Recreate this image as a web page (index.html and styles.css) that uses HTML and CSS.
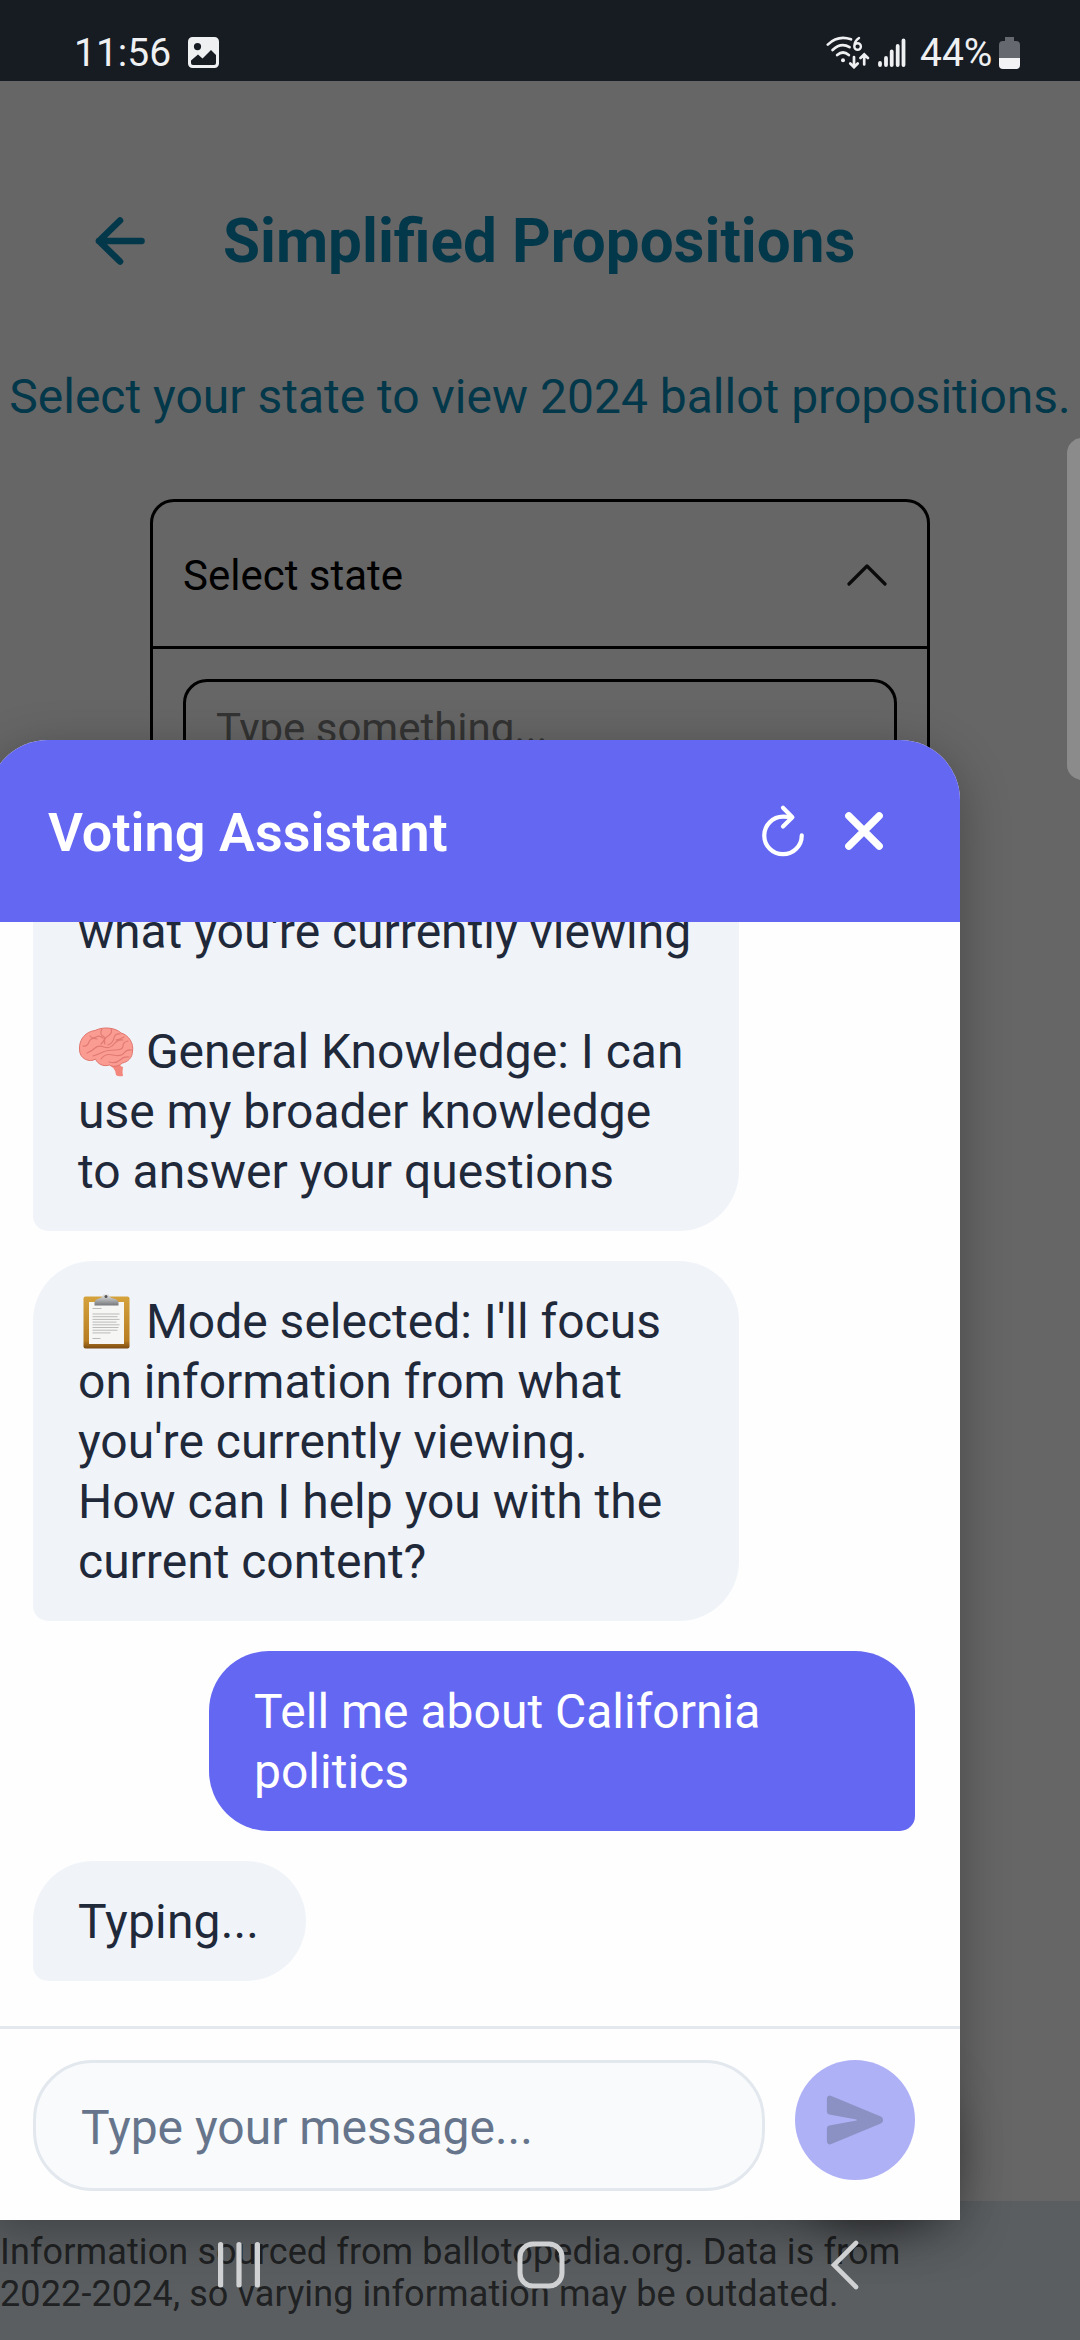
FILE: index.html
```html
<!DOCTYPE html>
<html lang="en">
<head>
<meta charset="utf-8">
<title>Simplified Propositions</title>
<link rel="stylesheet" href="styles.css">
</head>
<body>
<div class="phone">
  <header class="status">
    <span class="clock">11:56</span>
    <svg class="photo-icon" width="31" height="31" viewBox="0 0 31 31"><path fill="#eef0f2" fill-rule="evenodd" d="M4.500 0h22a4.500 4.500 0 0 1 4.500 4.500v22a4.500 4.500 0 0 1-4.500 4.500h-22A4.500 4.500 0 0 1 0 26.500v-22A4.500 4.500 0 0 1 4.500 0ZM9.500 6a3.600 3.600 0 1 0 0 7.200 3.600 3.600 0 0 0 0-7.200ZM3 23.500V26q0 2 2 2h21q2 0 2-2V18l-5-5-8.500 8.500L10 17.500Z"/></svg>
    <span class="status-right">
      <svg class="wifi" width="44" height="33" viewBox="0 0 44 33" fill="none" stroke="#eef0f2" stroke-width="2.700" stroke-linecap="round">
        <path d="M1.800 8.600Q12 -1.200 25 3.300M6.600 14Q15 6 23.500 11.200M11.200 19Q17 14 22.800 19"/>
        <circle cx="17" cy="24.300" r="2" fill="#eef0f2" stroke="none"/>
        <path stroke-width="2.400" d="M33 2Q28.500 5 28.300 10M28.300 10.500a3.300 3.300 0 1 0 6.600 0a3.300 3.300 0 1 0-6.600 0"/>
        <path d="M28 21v10M24.300 27.500l3.700 3.700 3.700-3.700M38.200 28.500v-10M34.500 22l3.700-3.700 3.700 3.700"/>
      </svg>
      <svg class="signal" width="28" height="30" viewBox="0 0 28 30" stroke="#eef0f2" stroke-width="3.800" stroke-linecap="round"><path d="M2 25v2M8 20v7M13.700 13.500V27M19.700 8v19M25.500 2.500V27"/></svg>
      <span class="percent">44%</span>
      <svg width="21" height="32" viewBox="0 0 21 32"><path fill="#65696f" d="M6 0h9v4h2a4 4 0 0 1 4 4v13H0V8a4 4 0 0 1 4-4h2Z"/><path fill="#f3f3f5" d="M0 21h21v7a4 4 0 0 1-4 4H4a4 4 0 0 1-4-4Z"/></svg>
    </span>
  </header>

  <main class="page">
    <div class="titlebar">
      <svg class="back" width="52" height="50" viewBox="0 0 52 50" fill="none" stroke="#03374a" stroke-width="6.600" stroke-linecap="round" stroke-linejoin="round"><path d="M26 4.500 5 25l21 20.500M5 25h42.500"/></svg>
      <h1 class="title">Simplified Propositions</h1>
    </div>
    <p class="intro">Select your state to view 2024 ballot propositions.</p>
    <div class="select">
      <div class="select-head">
        <span class="select-label">Select state</span>
        <svg width="40" height="24" viewBox="0 0 40 24" fill="none" stroke="#0a0a0a" stroke-width="3.200" stroke-linecap="round" stroke-linejoin="round"><path d="M2 21 20 3l18 18"/></svg>
      </div>
      <div class="select-body"><div class="search">Type something...</div></div>
    </div>
    <footer class="source">Information sourced from ballotopedia.org. Data is from<br>2022-2024, so varying information may be outdated.</footer>
  </main>

  <div class="edge-handle"></div>
  <div class="fab"></div>

  <section class="chat">
    <header class="chat-head">
      <h2 class="chat-title">Voting Assistant</h2>
      <svg width="60" height="60" viewBox="0 0 512 512" fill="none" stroke="#fff" stroke-width="36" stroke-linecap="round"><path stroke-miterlimit="10" d="M320 146s24.360-12-64-12a160 160 0 1 0 160 160"/><path stroke-linejoin="round" d="M256 58l80 80-80 80"/></svg>
      <svg class="close" width="72" height="72" viewBox="0 0 512 512" stroke="#fff" stroke-width="52" stroke-linecap="round"><path d="M148 148l216 216M364 148 148 364"/></svg>
    </header>
    <div class="messages">
      <div class="bubble bot clipped">what you're currently viewing<br><br><svg class="emoji" width="56" height="56" viewBox="0 0 56 56">
          <path d="M40 36q1 7 5 8-1 5 0 9-5 1-7-1 0-8-11-12Z" fill="#f4877d"/>
          <path d="M1.500 26C1 16 8 8.500 17 7.500 26 3 38 5 43 10c8 2 13 11 11.500 18 0 7-5 11-10 12-5 4-10 4-13 2-6 2-12-1-14-6C12 40 1 36 1.500 26Z" fill="#fb9c93" stroke="#e0756d" stroke-width="1"/>
          <g fill="none" stroke="#e07a72" stroke-width="1.200" stroke-linecap="round"><path d="M5 23q4 1 6-4t8-3M12 13q2 3 6 1t7 1M24 6q-3 5 1 7t-2 8M33 6q2 4-3 7t-3 8M42 11q-5-1-6 4t-6 7M9 30q5-2 8-5t9-1 10-3 9-4M50 18q-5 1-5 5t-8 4-12 2-10 4M54 27q-5-1-8 3t-11 2-12 4M51 34q-5-1-9 3t-11 2M38 17q5-1 8-3"/></g>
        </svg> General Knowledge: I can<br>use my broader knowledge<br>to answer your questions</div>
      <div class="bubble bot"><svg class="emoji" width="56" height="56" viewBox="0 0 56 56">
          <defs><linearGradient id="board" x1="0" y1="0" x2="0" y2="1"><stop offset="0" stop-color="#d5a23c"/><stop offset=".85" stop-color="#b87d22"/><stop offset="1" stop-color="#7c4b12"/></linearGradient><linearGradient id="clip" x1="0" y1="0" x2="0" y2="1"><stop offset="0" stop-color="#ececec"/><stop offset="1" stop-color="#74777b"/></linearGradient></defs>
          <rect x="5.500" y="3.500" width="46" height="52" rx="2" fill="url(#board)"/>
          <rect x="11" y="9" width="35" height="42" fill="#f6f6f4"/>
          <path stroke="#bbb" stroke-width="1" d="M14.500 15.500h9M14.500 21h27M14.500 23.700h25M14.500 26.400h27M14.500 29.100h24M14.500 31.800h27M14.500 34.500h26M14.500 37.200h25M14.500 39.900h18M14.500 45.500h8"/>
          <path d="M16.500 12.500V9q1-3 6-4 2-1 3-4h5q1 3 3 4 6 1 7 4v3.500Z" fill="url(#clip)"/>
          <circle cx="28" cy="3.500" r="1.500" fill="#555"/>
        </svg> Mode selected: I'll focus<br>on information from what<br>you're currently viewing.<br>How can I help you with the<br>current content?</div>
      <div class="bubble user">Tell me about California<br>politics</div>
      <div class="bubble bot typing">Typing...</div>
    </div>
    <div class="composer">
      <div class="input">Type your message...</div>
      <div class="send"><svg width="60" height="60" viewBox="0 0 512 512"><path fill="#8b92c3" d="M476.590 227.050l-.16-.07L49.350 49.840A23.560 23.560 0 0 0 27.140 52 24.650 24.650 0 0 0 16 72.590v113.290a24 24 0 0 0 19.520 23.570l232.930 43.070a4 4 0 0 1 0 7.860L35.530 303.450A24 24 0 0 0 16 327v113.310A23.570 23.570 0 0 0 26.590 460a23.940 23.940 0 0 0 13.220 4 24.550 24.550 0 0 0 9.520-1.930L476.400 285.940l.19-.09a32 32 0 0 0 0-58.800z"/></svg></div>
    </div>
  </section>

  <nav class="sysnav">
    <svg width="42" height="50" viewBox="0 0 42 50" stroke="#d0d1d2" stroke-width="5.200" stroke-linecap="round"><path d="M2.600 4.500v40.500M21 4.500v40.500M39.400 4.500v40.500"/></svg>
    <svg class="home" width="48" height="50" viewBox="0 0 48 50" fill="none" stroke="#d0d1d2" stroke-width="5"><rect x="3" y="4" width="42" height="42" rx="13"/></svg>
    <svg width="28" height="50" viewBox="0 0 28 50" fill="none" stroke="#d0d1d2" stroke-width="4.600" stroke-linecap="round"><path d="M25 3 3 25l22 22"/></svg>
  </nav>
</div>
</body>
</html>
```
FILE: styles.css
```css
* { box-sizing: border-box; }
body { margin: 0; font-family: Roboto, "Liberation Sans", sans-serif; }
svg { display: block; flex: none; }
h1, h2, p { margin: 0; }

.phone {
  position: relative;
  width: 1080px;
  height: 2340px;
  overflow: hidden;
  display: flex;
  flex-direction: column;
  background: #666;
}

/* status bar */
.status {
  height: 81px;
  flex: none;
  display: flex;
  align-items: center;
  padding: 24px 60px 0 74px;
  background: #171b22;
  color: #eef0f2;
  font-size: 39px;
  line-height: 46px;
}
.clock { width: 114px; }
.status-right { margin-left: auto; display: flex; align-items: center; }
.wifi { margin-right: 8px; }
.signal { margin-right: 14px; }
.percent { width: 79px; white-space: nowrap; }

/* page behind the chat */
.page { flex: 1; display: flex; flex-direction: column; align-items: center; white-space: nowrap; }
.titlebar {
  align-self: stretch;
  display: flex;
  align-items: center;
  gap: 77px;
  margin-top: 125px;
  padding-left: 94px;
  height: 70px;
}
.title { padding-top: 2px; font-size: 60.2px; line-height: 70px; font-weight: 700; color: #03374a; }
.intro { margin-top: 93px; font-size: 48px; line-height: 56px; color: #03374a; }
.select {
  width: 780px;
  height: 400px;
  margin-top: 74px;
  border: 3px solid #000;
  border-radius: 24px;
}
.select-head {
  height: 147px;
  display: flex;
  align-items: center;
  justify-content: space-between;
  padding: 2px 40px 0 30px;
  border-bottom: 3px solid #000;
  font-size: 42px;
  color: #000;
}
.select-body { padding: 30px; }
.search {
  height: 130px;
  padding: 22px 30px;
  border: 3px solid #000;
  border-radius: 24px;
  font-size: 42px;
  line-height: 50px;
  color: #333;
}
.source {
  align-self: stretch;
  height: 139px;
  margin-top: auto;
  padding-top: 30px;
  background: #5a5e61;
  color: #1f2122;
  font-size: 36px;
  line-height: 42px;
  letter-spacing: .12px;
}
.edge-handle {
  position: absolute;
  top: 438px;
  left: 1067px;
  width: 30px;
  height: 342px;
  border-radius: 15px;
  background: #8b8b8b;
}

/* floating button, covered by the chat apart from its shadow */
.fab {
  position: absolute;
  left: 795px;
  top: 2065px;
  width: 150px;
  height: 150px;
  border-radius: 50%;
  box-shadow: 0 10px 48px 4px rgba(0, 0, 0, .5);
}

/* chat panel */
.chat {
  position: absolute;
  left: -12px;
  top: 740px;
  width: 972px;
  height: 1480px;
  display: flex;
  flex-direction: column;
  overflow: hidden;
  border-radius: 60px 60px 0 0;
  background: #fefefe;
  box-shadow: 0 12px 50px rgba(0, 0, 0, .3);
}
.chat-head {
  height: 182px;
  flex: none;
  display: flex;
  align-items: center;
  padding: 0 60px;
  background: #6467f1;
}
.chat-title { flex: 1; padding-top: 3px; font-size: 54px; font-weight: 600; color: #fff; }
.close { margin-left: 15px; }
.messages {
  flex: 1;
  min-height: 0;
  overflow: hidden;
  display: flex;
  flex-direction: column;
  justify-content: flex-end;
  align-items: flex-start;
  gap: 30px;
  padding: 0 45px 45px;
}
.bubble {
  flex: none;
  padding: 31px 45px 29px;
  border-radius: 60px;
  font-size: 48px;
  line-height: 60px;
  white-space: nowrap;
}
.bot { background: #f0f4f9; color: #1f293a; border-bottom-left-radius: 15px; }
.bot:not(:last-child), .user { width: 706px; }
.clipped { border-top-left-radius: 0; border-top-right-radius: 0; }
.user { align-self: flex-end; background: #6467f1; color: #fff; border-bottom-right-radius: 15px; }
.typing { width: 273px; letter-spacing: .15px; }
.emoji { display: inline-block; vertical-align: top; margin-top: 1px; }
.composer {
  height: 194px;
  flex: none;
  display: flex;
  align-items: flex-start;
  gap: 30px;
  padding: 31px 45px 0;
  border-top: 3px solid #e2e8ee;
}
.input {
  flex: 1;
  height: 131px;
  padding: 37px 45px 0;
  border: 3px solid #e2e8ee;
  border-radius: 60px;
  background: #f8fafc;
  color: #66758b;
  font-size: 48px;
  line-height: 56px;
}
.send {
  width: 120px;
  height: 120px;
  display: flex;
  align-items: center;
  justify-content: center;
  border-radius: 50%;
  background: #afb1f7;
}

/* system navigation */
.sysnav {
  position: absolute;
  left: 0;
  right: 0;
  top: 2240px;
  display: flex;
  padding-left: 218px;
}
.home { margin: 0 266px 0 257px; }
```
